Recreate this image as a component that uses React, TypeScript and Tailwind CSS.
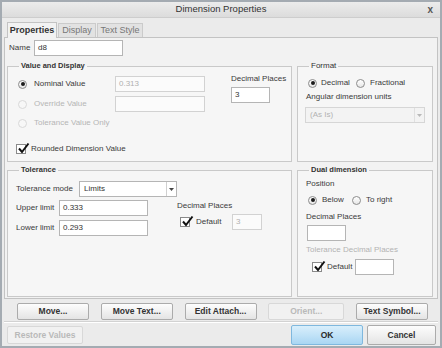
import React from 'react';

// small building blocks for the Creo-style dialog

const Radio = ({ checked = false, disabled = false }: { checked?: boolean; disabled?: boolean }) => (
    <span
        className={`w-[9px] h-[9px] rounded-full border flex items-center justify-center shrink-0 ${
            disabled ? 'border-[#d9d9d9] bg-[#f7f7f7]' : 'border-[#8c8c8c] bg-gradient-to-b from-white to-[#e6e6e6]'
        }`}
    >
        {checked && <span className="w-[4px] h-[4px] rounded-full bg-[#1c1c1c]" />}
    </span>
);

const Check = ({ className = '' }: { className?: string }) => (
    <span className={`relative inline-block w-[10px] h-[10px] border border-[#8a8a8a] bg-white shrink-0 ${className}`}>
        <svg className="absolute left-[0px] top-[-3px]" width="13" height="13" viewBox="0 0 13 13">
            <path d="M2 6.5 L5 10 L11.5 1.5" fill="none" stroke="#111" strokeWidth="2" />
        </svg>
    </span>
);

const Field = ({ value = '', className = '', disabled = false }: { value?: string; className?: string; disabled?: boolean }) => (
    <div
        className={`h-[16px] border px-[3px] flex items-center shrink-0 ${
            disabled ? 'border-[#d2d2d2] bg-[#fbfbfb] text-[#b0b0b0]' : 'border-[#b5b5b5] bg-white text-[#333]'
        } ${className}`}
    >
        {value}
    </div>
);

const Select = ({ value, className = '', disabled = false }: { value: string; className?: string; disabled?: boolean }) => (
    <div
        className={`h-[16px] border flex items-stretch shrink-0 ${
            disabled ? 'border-[#d6d6d6] bg-[#f3f3f3] text-[#b2b2b2]' : 'border-[#b5b5b5] bg-white text-[#333]'
        } ${className}`}
    >
        <span className="flex-1 flex items-center px-[4px]">{value}</span>
        <span className={`w-[10px] flex items-center justify-center border-l ${disabled ? 'border-[#e0e0e0]' : 'border-[#d0d0d0]'}`}>
            <svg width="5" height="3" viewBox="0 0 5 3">
                <path d="M0 0 L5 0 L2.5 3 Z" fill={disabled ? '#b8b8b8' : '#444'} />
            </svg>
        </span>
    </div>
);

const Button = ({ label, className = '', disabled = false, primary = false }: { label: string; className?: string; disabled?: boolean; primary?: boolean }) => (
    <div
        className={`flex items-center justify-center rounded-[2px] border font-bold text-[8.5px] shrink-0 ${
            disabled
                ? 'border-[#d8d8d8] bg-[#f1f1f1] text-[#b9b9b9]'
                : primary
                ? 'border-[#7fb8de] bg-gradient-to-b from-[#d9effc] to-[#a9d6f3] text-[#2a2a2a]'
                : 'border-[#ababab] bg-gradient-to-b from-[#fdfdfd] to-[#e4e4e4] text-[#333]'
        } ${className}`}
    >
        {label}
    </div>
);

const Group = ({ title, bold = true, className = '', children }: { title: string; bold?: boolean; className?: string; children: React.ReactNode }) => (
    <fieldset className={`border border-[#c9c9c9] bg-[#f6f6f6] min-w-0 ${className}`}>
        <legend className={`ml-[11px] px-[2px] leading-[10px] text-[7.5px] text-[#333] ${bold ? 'font-bold' : 'text-[8px]'}`}>{title}</legend>
        {children}
    </fieldset>
);

export default function App() {
    return (
        <div className="w-[442px] h-[348px] border-2 border-[#a4abb2] bg-[#ebebeb] flex flex-col font-['Liberation_Sans',Arial,sans-serif] text-[8px] text-[#3a3a3a] overflow-hidden">
            {/* Title bar */}
            <div className="h-[16px] shrink-0 relative flex items-center justify-center bg-gradient-to-b from-[#ececec] to-[#dcdcdc] border-b border-[#cdcdcd]">
                <span className="text-[9.5px] text-[#333]">Dimension Properties</span>
                <span className="absolute right-[7px] top-[2px] text-[10px] font-bold text-[#555] leading-[12px]">x</span>
            </div>

            <div className="flex-1 flex flex-col px-[2px] pt-[4px]">
                {/* Tabs */}
                <div className="h-[15px] flex items-end pl-[3px] gap-[1px] shrink-0">
                    <div className="h-[16px] w-[50px] -mb-[1px] relative z-10 flex items-center justify-center border border-b-0 border-[#c3c3c3] bg-[#f2f2f2] text-[9px] font-bold text-[#333]">
                        Properties
                    </div>
                    <div className="h-[14px] w-[38px] flex items-center justify-center border border-b-0 border-[#cbcbcb] bg-[#e2e2e2] text-[9px] text-[#777]">
                        Display
                    </div>
                    <div className="h-[14px] w-[46px] flex items-center justify-center border border-b-0 border-[#cbcbcb] bg-[#e2e2e2] text-[9px] text-[#777]">
                        Text Style
                    </div>
                </div>

                {/* Tab panel */}
                <div className="h-[262px] shrink-0 border border-[#c3c3c3] bg-[#f2f2f2] flex flex-col">
                    <div className="flex items-center h-[16px] mt-[2px] pl-[4px]">
                        <span className="w-[25px]">Name</span>
                        <Field value="d8" className="w-[89px]" />
                    </div>

                    <div className="grid grid-cols-[285px_136px] gap-x-[5px] gap-y-[3px] pl-[2px] mt-[5px]">
                        {/* Value and Display */}
                        <Group title="Value and Display" className="h-[101px]">
                            <div className="flex pl-[10px] pt-[3px]">
                                <div className="flex flex-col">
                                    <div className="h-[20px] flex items-center">
                                        <div className="w-[97px] flex items-center gap-[7px]">
                                            <Radio checked />
                                            <span>Nominal Value</span>
                                        </div>
                                        <Field value="0.313" disabled className="w-[90px]" />
                                    </div>
                                    <div className="h-[20px] flex items-center">
                                        <div className="w-[97px] flex items-center gap-[7px] text-[#b5b5b5]">
                                            <Radio disabled />
                                            <span>Override Value</span>
                                        </div>
                                        <div className="w-[90px] h-[16px] border border-[#d2d2d2] bg-[#fbfbfb]" />
                                    </div>
                                    <div className="h-[18px] flex items-center gap-[7px] text-[#b5b5b5]">
                                        <Radio disabled />
                                        <span>Tolerance Value Only</span>
                                    </div>
                                </div>
                                <div className="flex flex-col ml-[26px]">
                                    <span className="h-[10px] leading-[10px]">Decimal Places</span>
                                    <Field value="3" className="w-[39px] mt-[3px]" />
                                </div>
                            </div>
                            <div className="flex items-center gap-[5px] pl-[8px] mt-[11px]">
                                <Check />
                                <span>Rounded Dimension Value</span>
                            </div>
                        </Group>

                        {/* Format */}
                        <Group title="Format" bold={false} className="h-[101px]">
                            <div className="flex items-center h-[10px] mt-[7px] pl-[10px]">
                                <Radio checked />
                                <span className="ml-[4px] w-[35px]">Decimal</span>
                                <Radio />
                                <span className="ml-[5px]">Fractional</span>
                            </div>
                            <div className="h-[10px] leading-[10px] mt-[4px] pl-[8px]">Angular dimension units</div>
                            <Select value="(As Is)" disabled className="w-[120px] ml-[7px] mt-[5px]" />
                        </Group>

                        {/* Tolerance */}
                        <Group title="Tolerance" className="h-[132px]">
                            <div className="flex items-center pl-[8px] mt-[6px]">
                                <span className="w-[63px]">Tolerance mode</span>
                                <Select value="Limits" className="w-[98px]" />
                            </div>
                            <div className="flex pl-[8px] mt-[3px]">
                                <div className="flex flex-col gap-[4px]">
                                    <div className="flex items-center">
                                        <span className="w-[43px]">Upper limit</span>
                                        <Field value="0.333" className="w-[89px]" />
                                    </div>
                                    <div className="flex items-center">
                                        <span className="w-[43px]">Lower limit</span>
                                        <Field value="0.293" className="w-[89px]" />
                                    </div>
                                </div>
                                <div className="flex flex-col ml-[29px]">
                                    <span className="h-[10px] leading-[10px] mt-[1px]">Decimal Places</span>
                                    <div className="flex items-center mt-[3px]">
                                        <Check className="ml-[3px]" />
                                        <span className="ml-[6px] w-[36px]">Default</span>
                                        <Field value="3" disabled className="w-[30px]" />
                                    </div>
                                </div>
                            </div>
                        </Group>

                        {/* Dual dimension */}
                        <Group title="Dual dimension" className="h-[132px]">
                            <div className="h-[10px] leading-[10px] pl-[8px] mt-[4px]">Position</div>
                            <div className="flex items-center h-[10px] mt-[6px] pl-[10px]">
                                <Radio checked />
                                <span className="ml-[5px] w-[30px]">Below</span>
                                <Radio />
                                <span className="ml-[5px]">To right</span>
                            </div>
                            <div className="h-[10px] leading-[10px] pl-[8px] mt-[7px]">Decimal Places</div>
                            <Field className="w-[39px] ml-[9px] mt-[3px]" />
                            <div className="h-[10px] leading-[10px] pl-[8px] mt-[4px] text-[#b3b3b3]">Tolerance Decimal Places</div>
                            <div className="flex items-center mt-[4px] pl-[14px]">
                                <Check />
                                <span className="ml-[5px] w-[28px]">Default</span>
                                <Field className="w-[39px]" />
                            </div>
                        </Group>
                    </div>
                </div>

                {/* Action buttons */}
                <div className="flex justify-between pl-[13px] pr-[10px] mt-[4px] shrink-0">
                    <Button label="Move..." className="w-[72px] h-[17px]" />
                    <Button label="Move Text..." className="w-[72px] h-[17px]" />
                    <Button label="Edit Attach..." className="w-[72px] h-[17px]" />
                    <Button label="Orient..." disabled className="w-[76px] h-[17px]" />
                    <Button label="Text Symbol..." className="w-[72px] h-[17px]" />
                </div>

                <div className="mt-[1px] border-t border-[#d2d2d2] border-b border-b-white shrink-0" />

                <div className="flex items-center h-[20px] mt-[2px] pl-[3px] pr-[2px] shrink-0">
                    <Button label="Restore Values" disabled className="w-[76px] h-[18px]" />
                    <div className="flex-1" />
                    <Button label="OK" primary className="w-[72px] h-[20px]" />
                    <Button label="Cancel" className="w-[69px] h-[20px] ml-[4px]" />
                </div>
            </div>
        </div>
    );
}
